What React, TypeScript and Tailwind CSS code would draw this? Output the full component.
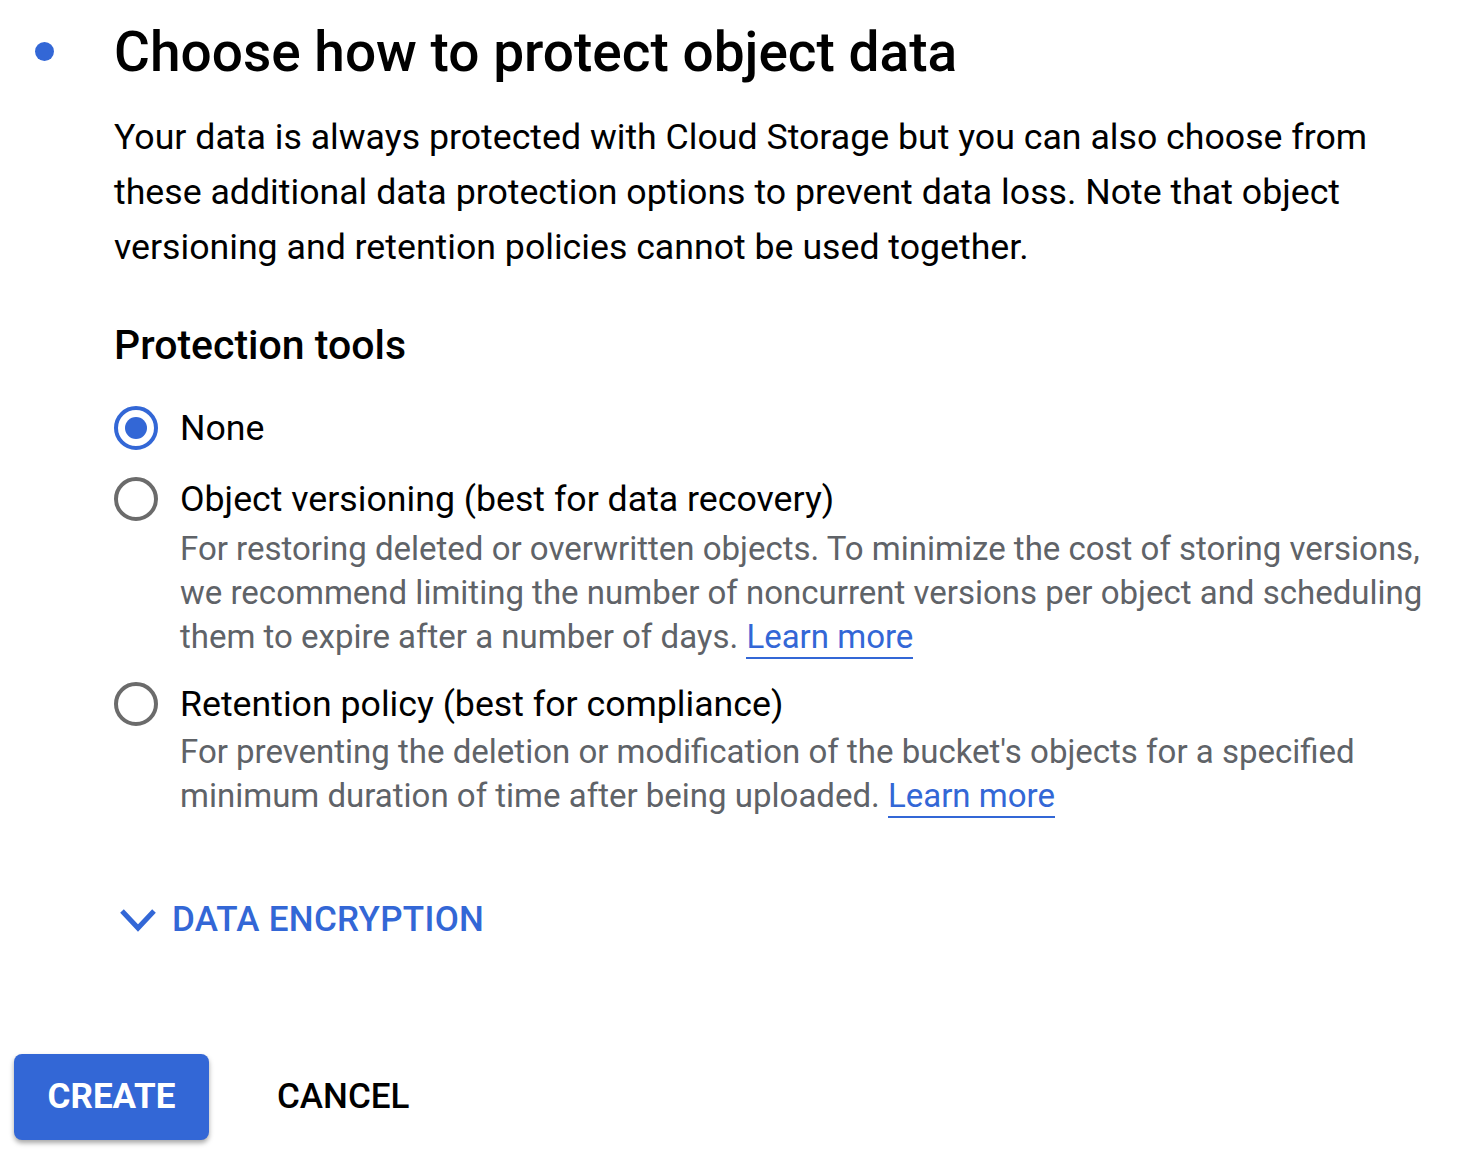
const Radio = ({ checked }: { checked?: boolean }) => (
  <div
    className={
      checked
        ? "w-[44px] h-[44px] rounded-full border-[4px] border-[#3367d6] flex items-center justify-center shrink-0"
        : "w-[44px] h-[44px] rounded-full border-[4px] border-[#6b6b6b] shrink-0"
    }
  >
    {checked && <div className="w-[22px] h-[22px] rounded-full bg-[#3367d6]" />}
  </div>
);

const LearnMore = () => (
  <a className="text-[#3367d6] border-b-2 border-[#3367d6] pb-[1px]">Learn more</a>
);

const App = () => {
  return (
    <div className="w-[1467px] h-[1166px] bg-white font-['Roboto',sans-serif] text-black overflow-hidden">
      <div className="flex pt-[20px]">
        <div className="w-[114px] flex justify-center pl-[14px] pr-[40px] pt-[22px] shrink-0">
          <div className="w-[19px] h-[19px] rounded-full bg-[#3367d6]" />
        </div>
        <div className="flex flex-col">
          <h1 className="text-[55px] font-medium leading-[64px] whitespace-nowrap">
            Choose how to protect object data
          </h1>
          <p className="mt-[26px] text-[35.7px] leading-[55px] whitespace-nowrap">
            Your data is always protected with Cloud Storage but you can also choose from
            <br />
            these additional data protection options to prevent data loss. Note that object
            <br />
            versioning and retention policies cannot be used together.
          </p>
          <h2 className="mt-[45px] text-[41px] font-medium leading-[50px]">Protection tools</h2>

          <div className="mt-[36px] flex flex-col">
            <div className="flex items-center gap-[22px]">
              <Radio checked />
              <span className="text-[35.7px] leading-[44px]">None</span>
            </div>

            <div className="mt-[27px] flex items-center gap-[22px]">
              <Radio />
              <span className="text-[35.7px] leading-[44px] whitespace-nowrap">
                Object versioning (best for data recovery)
              </span>
            </div>
            <p className="mt-[6px] ml-[66px] text-[33px] leading-[44px] text-[#5f6368] whitespace-nowrap">
              For restoring deleted or overwritten objects. To minimize the cost of storing versions,
              <br />
              we recommend limiting the number of noncurrent versions per object and scheduling
              <br />
              them to expire after a number of days. <LearnMore />
            </p>

            <div className="mt-[23px] flex items-center gap-[22px]">
              <Radio />
              <span className="text-[35.7px] leading-[44px] whitespace-nowrap">
                Retention policy (best for compliance)
              </span>
            </div>
            <p className="mt-[4px] ml-[66px] text-[33px] leading-[44px] text-[#5f6368] whitespace-nowrap">
              For preventing the deletion or modification of the bucket's objects for a specified
              <br />
              minimum duration of time after being uploaded. <LearnMore />
            </p>
          </div>

          <div className="mt-[80px] h-[44px] flex items-center gap-[14px] text-[#3367d6]">
            <svg width="40" height="26" viewBox="0 0 40 26" className="ml-[4px]">
              <polyline points="4,4 20,21 36,4" fill="none" stroke="#3367d6" strokeWidth="5" />
            </svg>
            <span className="text-[35px] leading-[44px] font-medium tracking-[0.3px]">DATA ENCRYPTION</span>
          </div>
        </div>
      </div>

      <div className="flex items-center gap-[68px] pl-[14px] mt-[112px]">
        <button className="w-[195px] h-[86px] rounded-[8px] bg-[#3367d6] text-white text-[35px] font-bold shadow-[0_3px_5px_rgba(0,0,0,0.35)]">
          CREATE
        </button>
        <span className="text-[35px] font-medium">CANCEL</span>
      </div>
    </div>
  );
};

export default App;
